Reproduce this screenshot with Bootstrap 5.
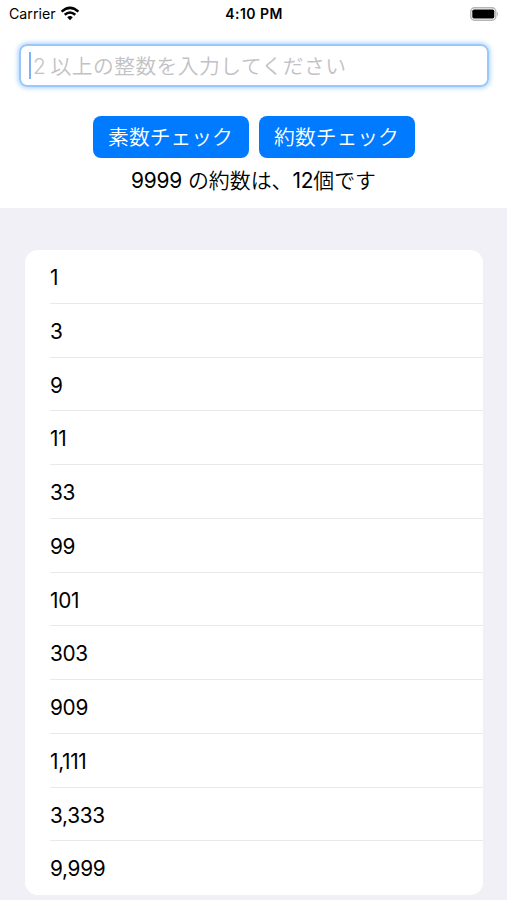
<!DOCTYPE html>
<html lang="ja">
<head>
<meta charset="utf-8">
<meta name="viewport" content="width=device-width, initial-scale=1">
<title>約数チェック</title>
<link href="https://cdn.jsdelivr.net/npm/bootstrap@5.3.0/dist/css/bootstrap.min.css" rel="stylesheet">
<style>
body{font-family:Inter,"Noto Sans CJK JP",sans-serif;color:#000;background:#f1f0f6;height:900px;overflow:hidden}
.top-panel{background:#fff;height:208px}
.status-bar{height:28px;padding:0 8px 0 9px;font-size:14.2px;line-height:28px}
.clock{font-weight:600;font-size:14px;letter-spacing:.45px}
.side{flex:1 1 0}
.entry{margin:16px 18px 0 19px;height:43px;border:2px solid #9ac8fb;border-radius:8px;box-shadow:0 0 5px 1px #a5d0fd;padding:3px 0 0 8px;font-size:20.8px;font-weight:350;letter-spacing:.38px;color:#c2c2c5}
.entry .num{margin-right:-2px}
.entry .ja{letter-spacing:.45px}
.caret{width:2px;height:27px;background:#7fb2f5;margin:-3px 2px 0 0}
.action{width:156px;height:42px;padding:2px 0 0;border:0;border-radius:8px;background:#007aff;color:#fff;font-size:20.8px;font-weight:350}
.actions{margin-top:29px;gap:10px}
.result{font-size:20.9px;line-height:30px;margin-top:8px}
.result .ja{font-weight:350}
.result .num{letter-spacing:-.2px}
.divisors{margin:42px 24px 0 25px;border-radius:13px;background:#fff;overflow:hidden}
.divisors .list-group-item{height:53.75px;margin-left:25px;padding:1px 0 0;border:0;border-bottom:1px solid #e9e9eb;color:#000;background:#fff;font-size:20.8px;letter-spacing:-.3px;line-height:54px}
.divisors .list-group-item:last-child{border-bottom:0}
</style>
</head>
<body>
<header class="top-panel">
<div class="status-bar d-flex align-items-center">
<div class="side d-flex align-items-center"><span>Carrier</span>
<svg class="ms-1" width="20" height="16" viewBox="0 0 20 16" fill="none" stroke="#000" stroke-width="2.5"><path d="M1.6 5.7Q10-2 18.4 5.7M4.7 8.7Q10 4.2 15.3 8.7"/><path d="M7.2 11.2Q10 8.7 12.8 11.2L10 14.2Z" fill="#000" stroke="none"/></svg></div>
<span class="clock">4:10 PM</span>
<div class="side d-flex justify-content-end"><svg width="30" height="15" viewBox="0 0 30 15"><rect x="1.8" y=".8" width="25" height="12.4" rx="3.7" fill="none" stroke="#b5b5b5" stroke-width="1.4"/><rect x="3.3" y="2.4" width="22" height="9.2" rx="1.8"/><path d="M28 4.7q2 2.3 0 4.6z" fill="#b5b5b5"/></svg></div>
</div>
<div class="entry d-flex align-items-center"><span class="caret"></span><span><span class="num">2</span> <span class="ja">以上の整数を入力してください</span></span></div>
<div class="actions d-flex justify-content-center"><button class="btn btn-primary action">素数チェック</button><button class="btn btn-primary action">約数チェック</button></div>
<p class="result text-center mb-0"><span class="num">9999</span> <span class="ja">の約数は、</span><span class="num">12</span><span class="ja">個です</span></p>
</header>
<main>
<ul class="list-group divisors">
<li class="list-group-item">1</li><li class="list-group-item">3</li><li class="list-group-item">9</li><li class="list-group-item">11</li><li class="list-group-item">33</li><li class="list-group-item">99</li><li class="list-group-item">101</li><li class="list-group-item">303</li><li class="list-group-item">909</li><li class="list-group-item">1,111</li><li class="list-group-item">3,333</li><li class="list-group-item">9,999</li>
</ul>
</main>
<script src="https://cdn.jsdelivr.net/npm/bootstrap@5.3.0/dist/js/bootstrap.bundle.min.js"></script>
</body>
</html>
